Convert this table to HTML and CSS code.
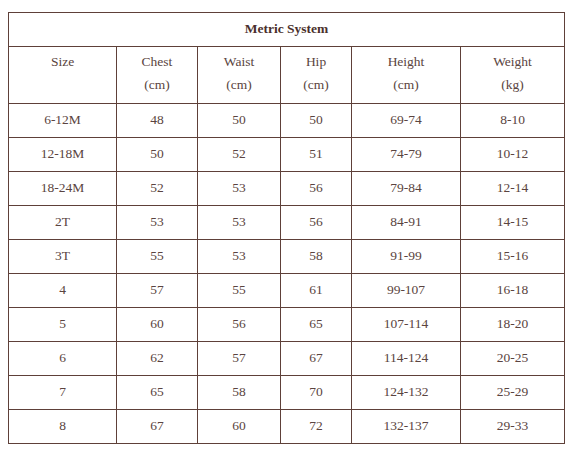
FILE: index.html
```html
<!DOCTYPE html>
<html>
<head>
<meta charset="utf-8">
<link rel="stylesheet" href="styles.css">
</head>
<body>
<table class="size-table">
  <colgroup>
    <col class="c1"><col class="c2"><col class="c3"><col class="c4"><col class="c5"><col class="c6">
  </colgroup>
  <thead>
    <tr><th class="title" colspan="6">Metric System</th></tr>
    <tr class="head">
      <td>Size</td>
      <td>Chest<br>(cm)</td>
      <td>Waist<br>(cm)</td>
      <td>Hip<br>(cm)</td>
      <td>Height<br>(cm)</td>
      <td>Weight<br>(kg)</td>
    </tr>
  </thead>
  <tbody>
    <tr><td>6-12M</td><td>48</td><td>50</td><td>50</td><td>69-74</td><td>8-10</td></tr>
    <tr><td>12-18M</td><td>50</td><td>52</td><td>51</td><td>74-79</td><td>10-12</td></tr>
    <tr><td>18-24M</td><td>52</td><td>53</td><td>56</td><td>79-84</td><td>12-14</td></tr>
    <tr><td>2T</td><td>53</td><td>53</td><td>56</td><td>84-91</td><td>14-15</td></tr>
    <tr><td>3T</td><td>55</td><td>53</td><td>58</td><td>91-99</td><td>15-16</td></tr>
    <tr><td>4</td><td>57</td><td>55</td><td>61</td><td>99-107</td><td>16-18</td></tr>
    <tr><td>5</td><td>60</td><td>56</td><td>65</td><td>107-114</td><td>18-20</td></tr>
    <tr><td>6</td><td>62</td><td>57</td><td>67</td><td>114-124</td><td>20-25</td></tr>
    <tr><td>7</td><td>65</td><td>58</td><td>70</td><td>124-132</td><td>25-29</td></tr>
    <tr><td>8</td><td>67</td><td>60</td><td>72</td><td>132-137</td><td>29-33</td></tr>
  </tbody>
</table>
</body>
</html>
```
FILE: styles.css
```css
html, body {
  margin: 0;
  background: #ffffff;
}
body {
  padding: 12px 8px;
  font-family: "Liberation Serif", "Times New Roman", serif;
  font-size: 13.5px;
  color: #5a4440;
}
.size-table {
  border-collapse: collapse;
  table-layout: fixed;
  width: 556px;
}
.c1 { width: 108px; }
.c2 { width: 81px; }
.c3 { width: 83px; }
.c4 { width: 71px; }
.c5 { width: 109px; }
.c6 { width: 104px; }
.size-table th,
.size-table td {
  border: 1px solid #5e4039;
  text-align: center;
  vertical-align: middle;
  line-height: 23px;
  padding: 4px 4px 6px;
  height: 23px;
  box-sizing: content-box;
}
.size-table th.title {
  font-weight: bold;
  color: #4a302c;
}
.size-table .head td {
  vertical-align: top;
  padding-top: 3px;
  padding-bottom: 7px;
}
```
